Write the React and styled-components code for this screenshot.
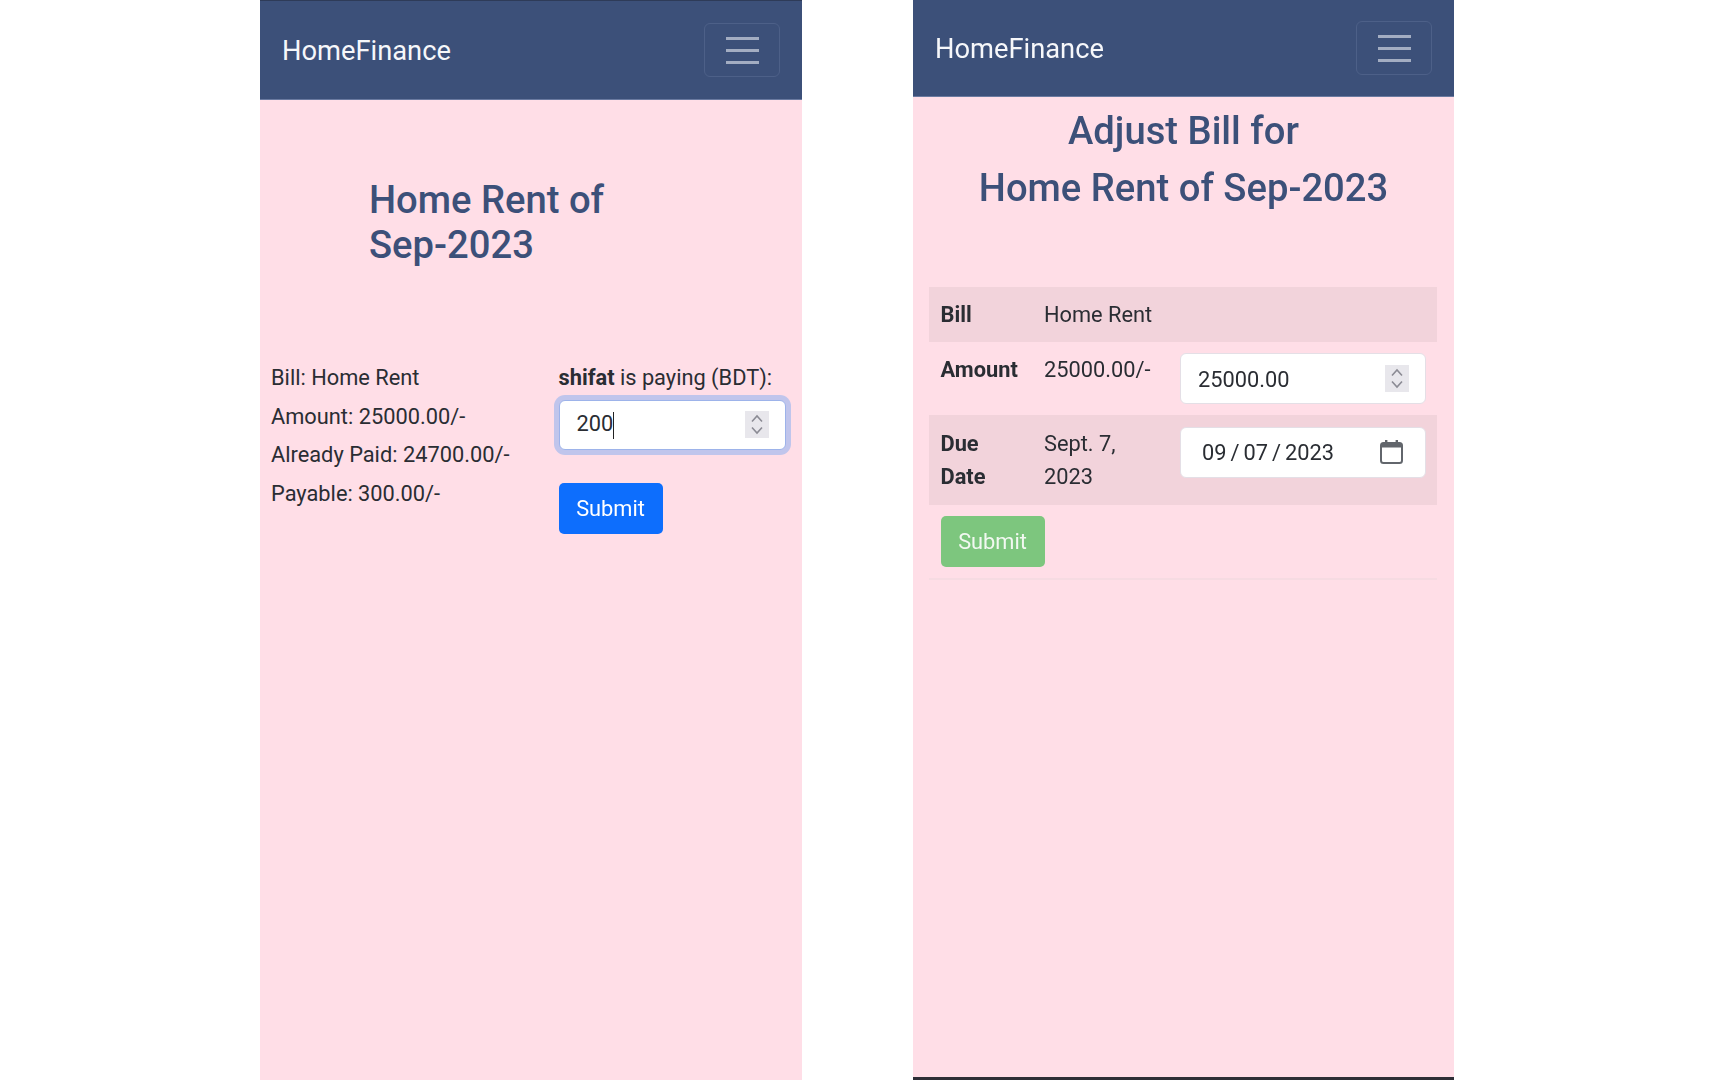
import React from "react";
import styled, { createGlobalStyle } from "styled-components";

const Global = createGlobalStyle`
  html, body { margin: 0; padding: 0; background: #fff; }
  body { font-family: Roboto, "Liberation Sans", sans-serif; color: #2a2d33; }
  * { box-sizing: border-box; }
`;

const Stage = styled.div`
  width: 1728px;
  height: 1080px;
  overflow: hidden;
  display: flex;
  justify-content: flex-start;
  gap: 111px;
  padding-left: 260px;
  filter: blur(0.45px);
`;

const Phone = styled.section`
  width: ${(p) => p.$w}px;
  height: 1080px;
  background: #ffdee7;
  display: flex;
  flex-direction: column;
  border-bottom: ${(p) => (p.$bar ? "3px solid #2e2e36" : "none")};
`;

const Navbar = styled.header`
  flex: none;
  height: ${(p) => p.$h}px;
  background: #3c5079;
  border-bottom: 1px solid #6a7aa0;
  border-top: ${(p) => (p.$edge ? "1px solid #2e3b58" : "none")};
  display: flex;
  align-items: center;
  justify-content: space-between;
  padding: 0 22px;
`;

const Brand = styled.div`
  font-size: 27.3px;
  color: #f6f7fa;
  line-height: 1;
  padding-top: 3px;
`;

const Toggler = styled.button`
  width: 76px;
  height: 54px;
  padding: 0;
  background: transparent;
  border: 1px solid #4d6088;
  border-radius: 6px;
  display: flex;
  align-items: center;
  justify-content: center;
`;

const Burger = () => (
  <svg width="33" height="27" viewBox="0 0 33 27" aria-hidden="true">
    <g stroke="#a3adc2" strokeWidth="2.8">
      <line x1="0" y1="1.5" x2="33" y2="1.5" />
      <line x1="0" y1="13.5" x2="33" y2="13.5" />
      <line x1="0" y1="25.5" x2="33" y2="25.5" />
    </g>
  </svg>
);

const Title = styled.h1`
  margin: ${(p) => p.$margin};
  font-size: 38.2px;
  line-height: ${(p) => p.$lh}px;
  font-weight: 500;
  color: #3c5079;
  text-align: ${(p) => p.$align || "left"};
`;

const PayRow = styled.div`
  display: flex;
  padding-left: 11px;
  font-size: 21.8px;
  line-height: 38.5px;
`;

const Info = styled.div`
  width: 287.5px;
  flex: none;
`;

const InfoLine = styled.div``;

const PayForm = styled.div`
  width: 227px;
  flex: none;
`;

const PayLabel = styled.div`
  white-space: nowrap;
  margin-bottom: 2px;
`;

const Field = styled.div`
  height: ${(p) => p.$h}px;
  margin-right: ${(p) => p.$mr || 0}px;
  background: #fff;
  border: 1px solid ${(p) => (p.$focus ? "#9db3ea" : "#e4dfe6")};
  border-radius: 6px;
  box-shadow: ${(p) => (p.$focus ? "0 0 0 5px #c0c5ec" : "none")};
  display: flex;
  align-items: center;
  justify-content: space-between;
  padding: ${(p) => p.$pad};
  font-size: 21.8px;
  line-height: 1;
  color: #2a2d33;
`;

const FieldText = styled.span`
  padding-top: ${(p) => p.$top || 0}px;
  word-spacing: ${(p) => p.$ws || 0}px;
`;

const Caret = styled.span`
  display: inline-block;
  width: 1px;
  height: 27px;
  background: #222;
  vertical-align: middle;
`;

const SpinBox = styled.span`
  width: 24px;
  height: 27px;
  background: #e8e7ec;
  display: flex;
  align-items: center;
  justify-content: center;
`;

const Spinner = () => (
  <SpinBox>
    <svg width="14" height="21" viewBox="0 0 14 21" aria-hidden="true">
      <g fill="none" stroke="#8b8b94" strokeWidth="1.6">
        <polyline points="2,7.5 7,2 12,7.5" />
        <polyline points="2,13.5 7,19 12,13.5" />
      </g>
    </svg>
  </SpinBox>
);

const CalendarIcon = styled.svg`
  margin-bottom: 2px;
`;

const Calendar = () => (
  <CalendarIcon width="23" height="24" viewBox="0 0 23 24" aria-hidden="true">
    <rect x="1" y="3" width="21" height="20" rx="2.5" fill="none" stroke="#62666c" strokeWidth="2" />
    <rect x="1" y="3" width="21" height="4.5" fill="#62666c" />
    <rect x="5" y="0" width="2.4" height="5" fill="#62666c" />
    <rect x="15.6" y="0" width="2.4" height="5" fill="#62666c" />
  </CalendarIcon>
);

const Submit = styled.button`
  display: block;
  width: 104px;
  height: 51px;
  padding: 0;
  border: none;
  border-radius: 5px;
  background: ${(p) => p.$bg};
  color: ${(p) => p.$fg};
  font-family: inherit;
  font-size: 21.8px;
  margin: ${(p) => p.$margin || "0"};
`;

const BillTable = styled.table`
  width: 508px;
  margin: 0 0 0 16px;
  border-collapse: collapse;
  table-layout: fixed;
  font-size: 21.8px;
  line-height: 33px;
`;

const Tr = styled.tr`
  background: ${(p) => (p.$shade ? "#f2d3db" : "transparent")};
  height: ${(p) => p.$h}px;
  vertical-align: top;
`;

const Th = styled.th`
  text-align: left;
  font-weight: 700;
  padding: ${(p) => p.$pad || 11}px 0 0 11.5px;
`;

const Td = styled.td`
  padding: ${(p) => p.$pad || 11}px 0 0 11px;
`;

const FootCell = styled.td`
  padding: 11px 11.5px;
  border-bottom: 2px solid #f6dbe2;
`;

export default function App() {
  return (
    <Stage>
      <Global />
      <Phone $w={542}>
        <Navbar $h={100} $edge>
          <Brand>HomeFinance</Brand>
          <Toggler aria-label="menu"><Burger /></Toggler>
        </Navbar>
        <Title $lh={45} $margin="78px 0 91px 109px">Home Rent of<br />Sep-2023</Title>
        <PayRow>
          <Info>
            <InfoLine>Bill: Home Rent</InfoLine>
            <InfoLine>Amount: 25000.00/-</InfoLine>
            <InfoLine>Already Paid: 24700.00/-</InfoLine>
            <InfoLine>Payable: 300.00/-</InfoLine>
          </Info>
          <PayForm>
            <PayLabel><b>shifat</b> is paying (BDT):</PayLabel>
            <Field $h={50} $focus $pad="0 16px 0 17px">
              <FieldText $top={2}>200<Caret /></FieldText>
              <Spinner />
            </Field>
            <Submit $bg="#0d6efd" $fg="#fff" $margin="33px 0 0">Submit</Submit>
          </PayForm>
        </PayRow>
      </Phone>
      <Phone $w={541} $bar>
        <Navbar $h={97}>
          <Brand>HomeFinance</Brand>
          <Toggler aria-label="menu"><Burger /></Toggler>
        </Navbar>
        <Title $lh={57} $margin="6px 0 70px" $align="center">Adjust Bill for<br />Home Rent of Sep-2023</Title>
        <BillTable>
          <colgroup>
            <col style={{ width: 104 }} />
            <col style={{ width: 136 }} />
            <col />
          </colgroup>
          <tbody>
            <Tr $shade $h={55}>
              <Th>Bill</Th>
              <Td>Home Rent</Td>
              <Td />
            </Tr>
            <Tr $h={73}>
              <Th>Amount</Th>
              <Td>25000.00/-</Td>
              <Td>
                <Field $h={51} $mr={11} $pad="0 16px 0 17px">
                  <FieldText $top={2}>25000.00</FieldText>
                  <Spinner />
                </Field>
              </Td>
            </Tr>
            <Tr $shade $h={90}>
              <Th $pad={12}>Due<br />Date</Th>
              <Td $pad={12}>Sept. 7,<br />2023</Td>
              <Td $pad={12}>
                <Field $h={51} $mr={11} $pad="0 22px 0 21px">
                  <FieldText $ws={-1.4}>09 / 07 / 2023</FieldText>
                  <Calendar />
                </Field>
              </Td>
            </Tr>
            <tr>
              <FootCell colSpan={3}>
                <Submit $bg="#7dc67e" $fg="#f2f8f1">Submit</Submit>
              </FootCell>
            </tr>
          </tbody>
        </BillTable>
      </Phone>
    </Stage>
  );
}
